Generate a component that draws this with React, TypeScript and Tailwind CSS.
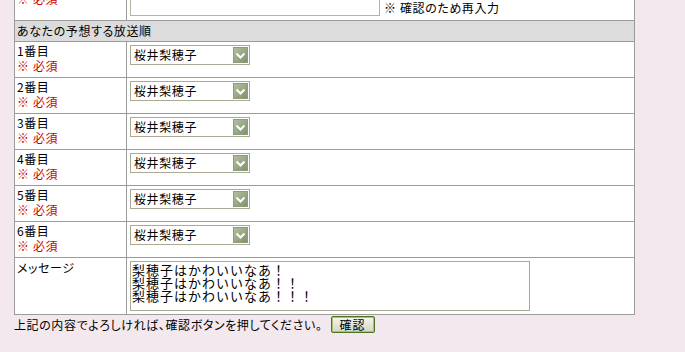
import React from "react";

function SelectBox() {
  return (
    <div className="flex h-[20px] w-[120px] items-center border border-[#a9ab94] bg-white pl-[3px]">
      <span className="leading-[14px]">桜井梨穂子</span>
      <svg className="ml-auto mr-[1px]" width="15" height="16" viewBox="0 0 15 16">
        <defs>
          <linearGradient id="ag" x1="0" y1="0" x2="1" y2="1">
            <stop offset="0" stopColor="#b3c2a2" />
            <stop offset="1" stopColor="#7f9069" />
          </linearGradient>
        </defs>
        <rect x="0.5" y="0.5" width="14" height="15" fill="url(#ag)" stroke="#8e9c7e" />
        <path d="M3.5 6.5 L7.5 10.5 L11.5 6.5" fill="none" stroke="#ffffff" strokeWidth="2" />
      </svg>
    </div>
  );
}

export default function App() {
  const rows = [1, 2, 3, 4, 5, 6];
  return (
    <div className="min-h-screen w-full overflow-hidden bg-[#f2e8ee] font-['Noto_Sans_CJK_JP',sans-serif] text-[12px] tracking-[0.6px] text-black [font-feature-settings:'palt']">
      <div className="ml-[14px] mt-[-25px] w-[621px] border border-[#9c9c9c] bg-white">
        <div className="flex h-[45px] border-b border-[#9c9c9c]">
          <div className="w-[112px] shrink-0 border-r border-[#9c9c9c] pl-[2px] leading-[15px]">
            <div>メールアドレス</div>
            <div className="text-[#cc0000]">※ 必須</div>
          </div>
          <div className="flex flex-1 items-end pb-[4px] pl-[3px]">
            <div className="h-[30px] w-[250px] border border-[#b4b49a] bg-white" />
            <span className="mb-[1px] ml-[4px] leading-[14px]">※ 確認のため再入力</span>
          </div>
        </div>
        <div className="flex h-[21px] items-center border-b border-[#9c9c9c] bg-[#dcdcdc] pl-[2px] leading-[20px]">
          あなたの予想する放送順
        </div>
        {rows.map((n) => (
          <div key={n} className="flex h-[36px] border-b border-[#9c9c9c]">
            <div className="w-[112px] shrink-0 border-r border-[#9c9c9c] pl-[2px] pt-[1px] leading-[15px]">
              <div>{n}番目</div>
              <div className="text-[#cc0000]">※ 必須</div>
            </div>
            <div className="flex-1 pl-[3px] pt-[3px]">
              <SelectBox />
            </div>
          </div>
        ))}
        <div className="flex h-[56px]">
          <div className="w-[112px] shrink-0 border-r border-[#9c9c9c] pl-[2px] pt-[3px] leading-[14px]">
            メッセージ
          </div>
          <div className="flex-1 pl-[3px] pt-[3px]">
            <textarea
              readOnly
              className="block h-[50px] w-[400px] resize-none overflow-hidden border border-[#a9ab94] bg-white px-[1px] py-[1px] font-['Noto_Sans_CJK_JP',monospace] text-[13px] leading-[13px] tracking-[1px] outline-none [font-feature-settings:normal]"
              defaultValue={"梨穂子はかわいいなあ！\n梨穂子はかわいいなあ！！\n梨穂子はかわいいなあ！！！"}
            />
          </div>
        </div>
      </div>
      <div className="ml-[14px] mt-[1px] flex h-[17px] items-center">
        <span className="leading-[14px]">上記の内容でよろしければ、確認ボタンを押してください。</span>
        <button className="ml-[8px] flex h-[17px] w-[44px] items-center justify-center rounded-[2px] border border-[#4e7320] bg-gradient-to-b from-[#f6f6ee] to-[#d3d7c3] text-[12px] leading-[12px] tracking-[1px] text-black shadow-[inset_0_0_0_1px_#a9c277]">
          確認
        </button>
      </div>
    </div>
  );
}
